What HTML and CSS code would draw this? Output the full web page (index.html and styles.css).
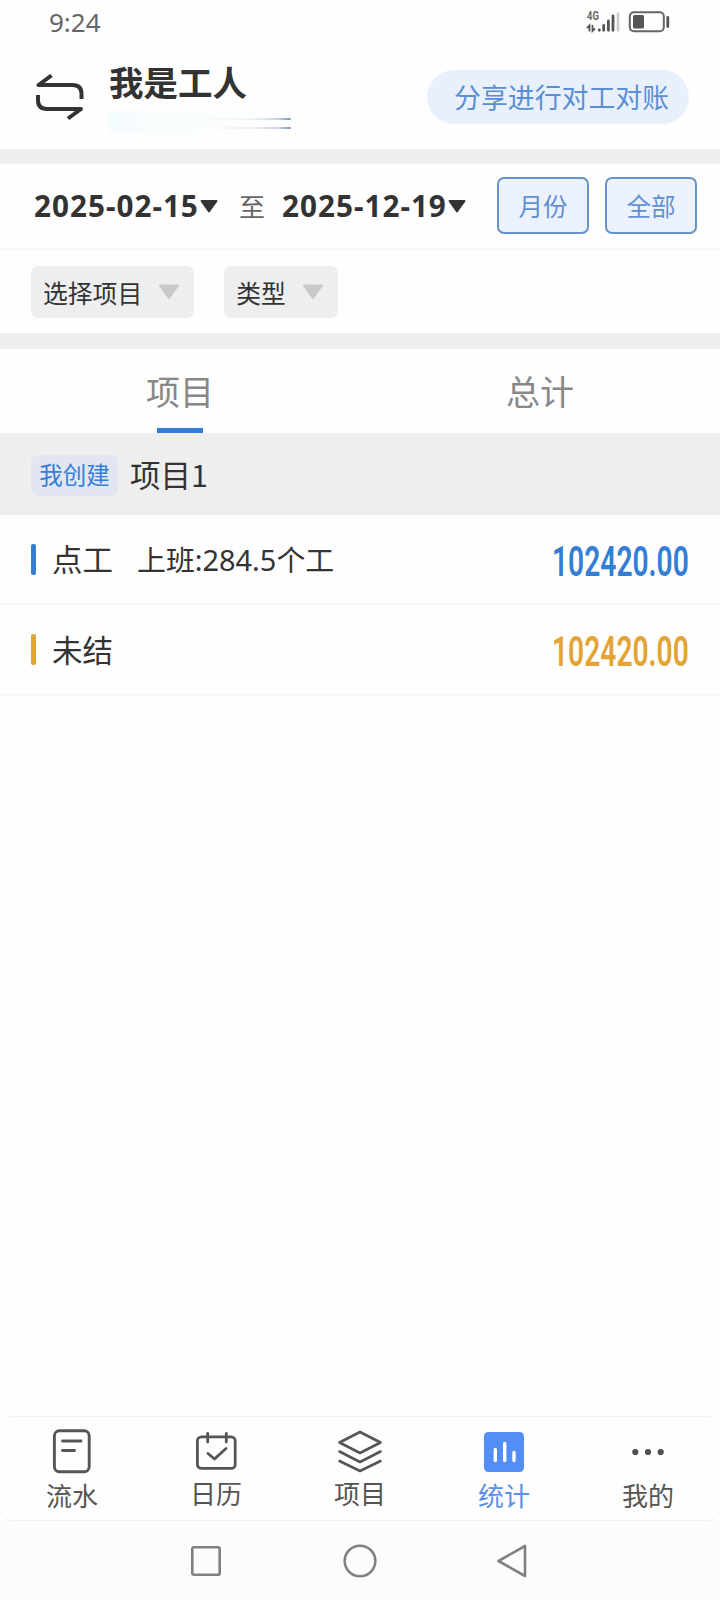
FILE: index.html
```html
<!DOCTYPE html>
<html lang="zh-CN">
<head>
<meta charset="utf-8">
<title>我是工人</title>
<link rel="stylesheet" href="styles.css">
</head>
<body>
<div class="screen">
  <div class="status">
    <span class="clock">9:24</span>
    <div class="indicators">
      <div class="network">
        <span class="gen">4G</span>
        <svg width="34" height="22" viewBox="0 0 34 22">
          <g fill="none" stroke="#555" stroke-width="1.8"><path d="M1 17L3.500 14.500V20.500M6.500 14V20L9 17.500"/></g>
          <g fill="none" stroke="#555" stroke-width="2.8" stroke-linecap="round"><path d="M13.3 19V19.3M17.7 14.5V19.3M22.4 10V19.3M27 5V19.3"/></g>
          <path d="M32 1.5V20.5" stroke="#ccc" stroke-width="2.6"/>
        </svg>
      </div>
      <svg width="42" height="22" viewBox="0 0 42 22">
        <rect x="1.8" y="1.3" width="34" height="19" rx="4" fill="none" stroke="#666" stroke-width="2"/>
        <rect x="5" y="4" width="11" height="13.5" rx="1.5" fill="#555"/>
        <path d="M39.8 6.5V15.5" stroke="#555" stroke-width="2.8" stroke-linecap="round"/>
      </svg>
    </div>
  </div>

  <header class="header">
    <svg class="swap" width="50" height="48" viewBox="0 0 50 48" fill="none" stroke="#333" stroke-width="4" stroke-linejoin="round">
      <path d="M16.500 1.500L3.500 11H37.500Q46.500 11 46.500 20V25"/>
      <path d="M3 21V26Q3 35 12 35H46L33 44.500"/>
    </svg>
    <div class="identity">
      <h1>我是工人</h1>
      <div class="smudge"><i></i><i></i></div>
    </div>
    <div class="share">分享进行对工对账</div>
  </header>

  <section class="dates">
    <span class="date">2025-02-15</span>
    <svg class="caret" width="18" height="13" viewBox="0 0 18 13"><path d="M1.500 1H16.500L9 11.500Z" fill="#333" stroke="#333" stroke-width="2" stroke-linejoin="round"/></svg>
    <span class="to">至</span>
    <span class="date">2025-12-19</span>
    <svg class="caret" width="18" height="13" viewBox="0 0 18 13"><path d="M1.500 1H16.500L9 11.500Z" fill="#333" stroke="#333" stroke-width="2" stroke-linejoin="round"/></svg>
    <div class="quick"><span>月份</span><span>全部</span></div>
  </section>

  <section class="selects">
    <div class="select">选择项目<svg width="22" height="16" viewBox="0 0 22 16"><path d="M2 1.500H20L11 14Z" fill="#c8c8c8" stroke="#c8c8c8" stroke-width="2" stroke-linejoin="round"/></svg></div>
    <div class="select">类型<svg width="22" height="16" viewBox="0 0 22 16"><path d="M2 1.500H20L11 14Z" fill="#c8c8c8" stroke="#c8c8c8" stroke-width="2" stroke-linejoin="round"/></svg></div>
  </section>

  <nav class="tabs">
    <div class="tab active">项目</div>
    <div class="tab">总计</div>
  </nav>

  <div class="group"><span class="tag">我创建</span><span class="project">项目1</span></div>
  <div class="row blue"><i class="bar"></i><span class="label">点工</span><span class="detail">上班<span class="num">:284.5</span>个工</span><span class="amount">102420.00</span></div>
  <div class="row orange"><i class="bar"></i><span class="label">未结</span><span class="amount">102420.00</span></div>

  <main class="blank"></main>

  <nav class="bottom">
    <div class="item">
      <svg width="44" height="46" viewBox="0 0 44 46" fill="none" stroke="#555" stroke-width="2.900" stroke-linecap="round"><rect x="4.400" y="2.800" width="34.800" height="41" rx="5"/><path d="M12.500 13H31M12.500 22.500H24.500"/></svg>
      <span>流水</span>
    </div>
    <div class="item raised">
      <svg width="44" height="46" viewBox="0 0 44 46" fill="none" stroke="#555" stroke-width="2.800" stroke-linecap="round" stroke-linejoin="round"><rect x="3.400" y="8.800" width="37.800" height="31.600" rx="4"/><path d="M13.700 5.500V14M32.300 5.500V14M14 25.500L20.500 31L32 20.500"/></svg>
      <span>日历</span>
    </div>
    <div class="item raised">
      <svg width="46" height="46" viewBox="0 0 46 46" fill="none" stroke="#555" stroke-width="2.600" stroke-linecap="round" stroke-linejoin="round"><path d="M23 4L43.500 14.500L23 25L2.500 14.500ZM2.500 23.500L23 34L43.500 23.500M2.500 33L23 43L43.500 33"/></svg>
      <span>项目</span>
    </div>
    <div class="item selected">
      <svg width="44" height="46" viewBox="0 0 44 46"><rect x="2" y="4" width="40" height="40" rx="4.500" fill="#538ef6"/><path d="M13.300 21.500V32.500M22.700 15.500V32.500M32 24.500V32.500" stroke="#fff" stroke-width="3.400" stroke-linecap="round"/></svg>
      <span>统计</span>
    </div>
    <div class="item">
      <svg width="44" height="46" viewBox="0 0 44 46" fill="#505050"><circle cx="9.300" cy="24" r="3.100"/><circle cx="22" cy="24" r="3.100"/><circle cx="34.700" cy="24" r="3.100"/></svg>
      <span>我的</span>
    </div>
  </nav>

  <div class="system">
    <svg width="34" height="34" viewBox="0 0 34 34"><rect x="3.300" y="3.300" width="27.400" height="27.400" rx="1.500"/></svg>
    <svg width="34" height="34" viewBox="0 0 34 34"><circle cx="17" cy="17" r="15.300"/></svg>
    <svg width="34" height="34" viewBox="0 0 34 34"><path d="M28 2V32L1.500 17Z" stroke-linejoin="round"/></svg>
  </div>
</div>
</body>
</html>
```
FILE: styles.css
```css
* { box-sizing: border-box; }
body { margin: 0; background: #fefefe; color: #333; }
svg { display: block; flex: none; }
.screen { width: 720px; height: 1600px; display: flex; flex-direction: column; overflow: hidden; font-family: "Noto Sans CJK SC", sans-serif; }
.status { height: 44px; flex: none; display: flex; justify-content: space-between; align-items: center; padding: 0 49px; color: #666; }
.clock { font: 400 26px/44px "Noto Sans", sans-serif; }
.indicators { display: flex; gap: 8px; align-items: center; margin-right: 1px; }
.network { position: relative; }
.gen { position: absolute; left: 1px; top: 0; font: 700 12.500px/10px Roboto, sans-serif; transform: scaleX(.75); transform-origin: left; }

.header { height: 120px; flex: none; display: flex; border-bottom: 15px solid #efefef; padding: 0 31px 0 35px; }
.swap { margin-top: 30px; }
.identity { margin-left: 24px; width: 186px; }
h1 { margin: 12px 0 0; font-size: 34.500px; line-height: 50px; font-weight: 700; white-space: nowrap; }
.smudge { width: 183px; height: 24px; margin-top: 4px; padding-top: 8px; background: linear-gradient(90deg, #f5fcfd, #fbfdfe 55%, #fefefe 90%); }
.smudge i { display: block; width: 182px; height: 2px; margin-bottom: 7px; border-radius: 1px; background: linear-gradient(90deg, transparent 50%, #eef3f7 78%, #c8d4e4 93%, #7a92bd); }
.share { margin: 26px 0 0 auto; width: 262px; height: 54px; border-radius: 27px; background: #e8f0fc; color: #5b8fd3; font-size: 26.900px; line-height: 53px; padding-left: 27px; white-space: nowrap; }

.dates { height: 86px; flex: none; display: flex; align-items: center; padding: 0 23px 0 34px; border-bottom: 2px solid #f7f7f7; }
.date { width: 165px; font: 700 29.700px/42px "Noto Sans", sans-serif; letter-spacing: 1px; white-space: nowrap; }
.caret { margin: 0 0 0 1px; }
.to { width: 26px; margin: 0 17px 0 21px; font-size: 26px; line-height: 40px; color: #666; }
.quick { margin: -2px 0 0 auto; display: flex; gap: 16px; }
.quick span { width: 92px; height: 57px; border: 2px solid #6694c4; border-radius: 7px; background: #ebf2fd; color: #6390d3; font-size: 24.500px; line-height: 54px; text-align: center; }
.selects { height: 99px; flex: none; display: flex; gap: 30px; padding: 16px 31px; border-bottom: 16px solid #efefef; }
.select { height: 52px; border-radius: 7px; background: #eee; display: flex; align-items: center; gap: 16px; padding: 0 14px 0 12px; font-size: 24.800px; line-height: 51px; }

.tabs { height: 84px; flex: none; display: flex; }
.tab { flex: 1; position: relative; text-align: center; color: #888; font-size: 34px; line-height: 83px; }
.active::after { content: ""; position: absolute; bottom: 0; left: 157px; width: 46px; height: 5px; background: #327ed5; }
.group { height: 82px; flex: none; background: #eee; display: flex; align-items: center; padding: 2px 31px 0; }
.tag { width: 87px; height: 41px; border-radius: 7px; background: #e1e6f1; color: #3480da; font-size: 23.500px; line-height: 39px; text-align: center; }
.project { margin: -3px 0 0 12px; font-size: 30.500px; line-height: 42px; }
.row { height: 90px; flex: none; display: flex; align-items: center; padding: 0 31px; border-bottom: 2px solid #f6f6f6; }
.orange { height: 91px; }
.bar { width: 5px; height: 31px; border-radius: 2px; background: currentColor; }
.blue { color: #327ed5; }
.orange { color: #e3a435; }
.label, .detail { color: #333; white-space: nowrap; line-height: 44px; margin-top: -2px; }
.label { margin-left: 16px; font-size: 30.500px; }
.detail { margin: 0 0 0 24px; font-size: 28.900px; }
.num { font-family: "Noto Sans", sans-serif; }
.amount { margin: 3px 0 0 auto; font: 600 43px/50px Roboto, sans-serif; transform: scaleX(.655); transform-origin: right; }

.blank { flex: 1; }
.bottom { height: 105px; flex: none; display: flex; padding-top: 11px; border: 1px solid #f2f2f2; border-radius: 12px; border-left: 0; border-right: 0; }
.item { flex: 1; display: flex; flex-direction: column; align-items: center; color: #555; font-size: 26px; line-height: 40px; }
.item span { margin-top: 1px; }
.raised span { margin-top: -1px; }
.selected { color: #5a8feb; }
.system { height: 79px; flex: none; display: flex; justify-content: center; gap: 120px; padding-top: 23px; background: #fcfcfc; }
.system svg { fill: none; stroke: #808080; stroke-width: 2.600; }
```
